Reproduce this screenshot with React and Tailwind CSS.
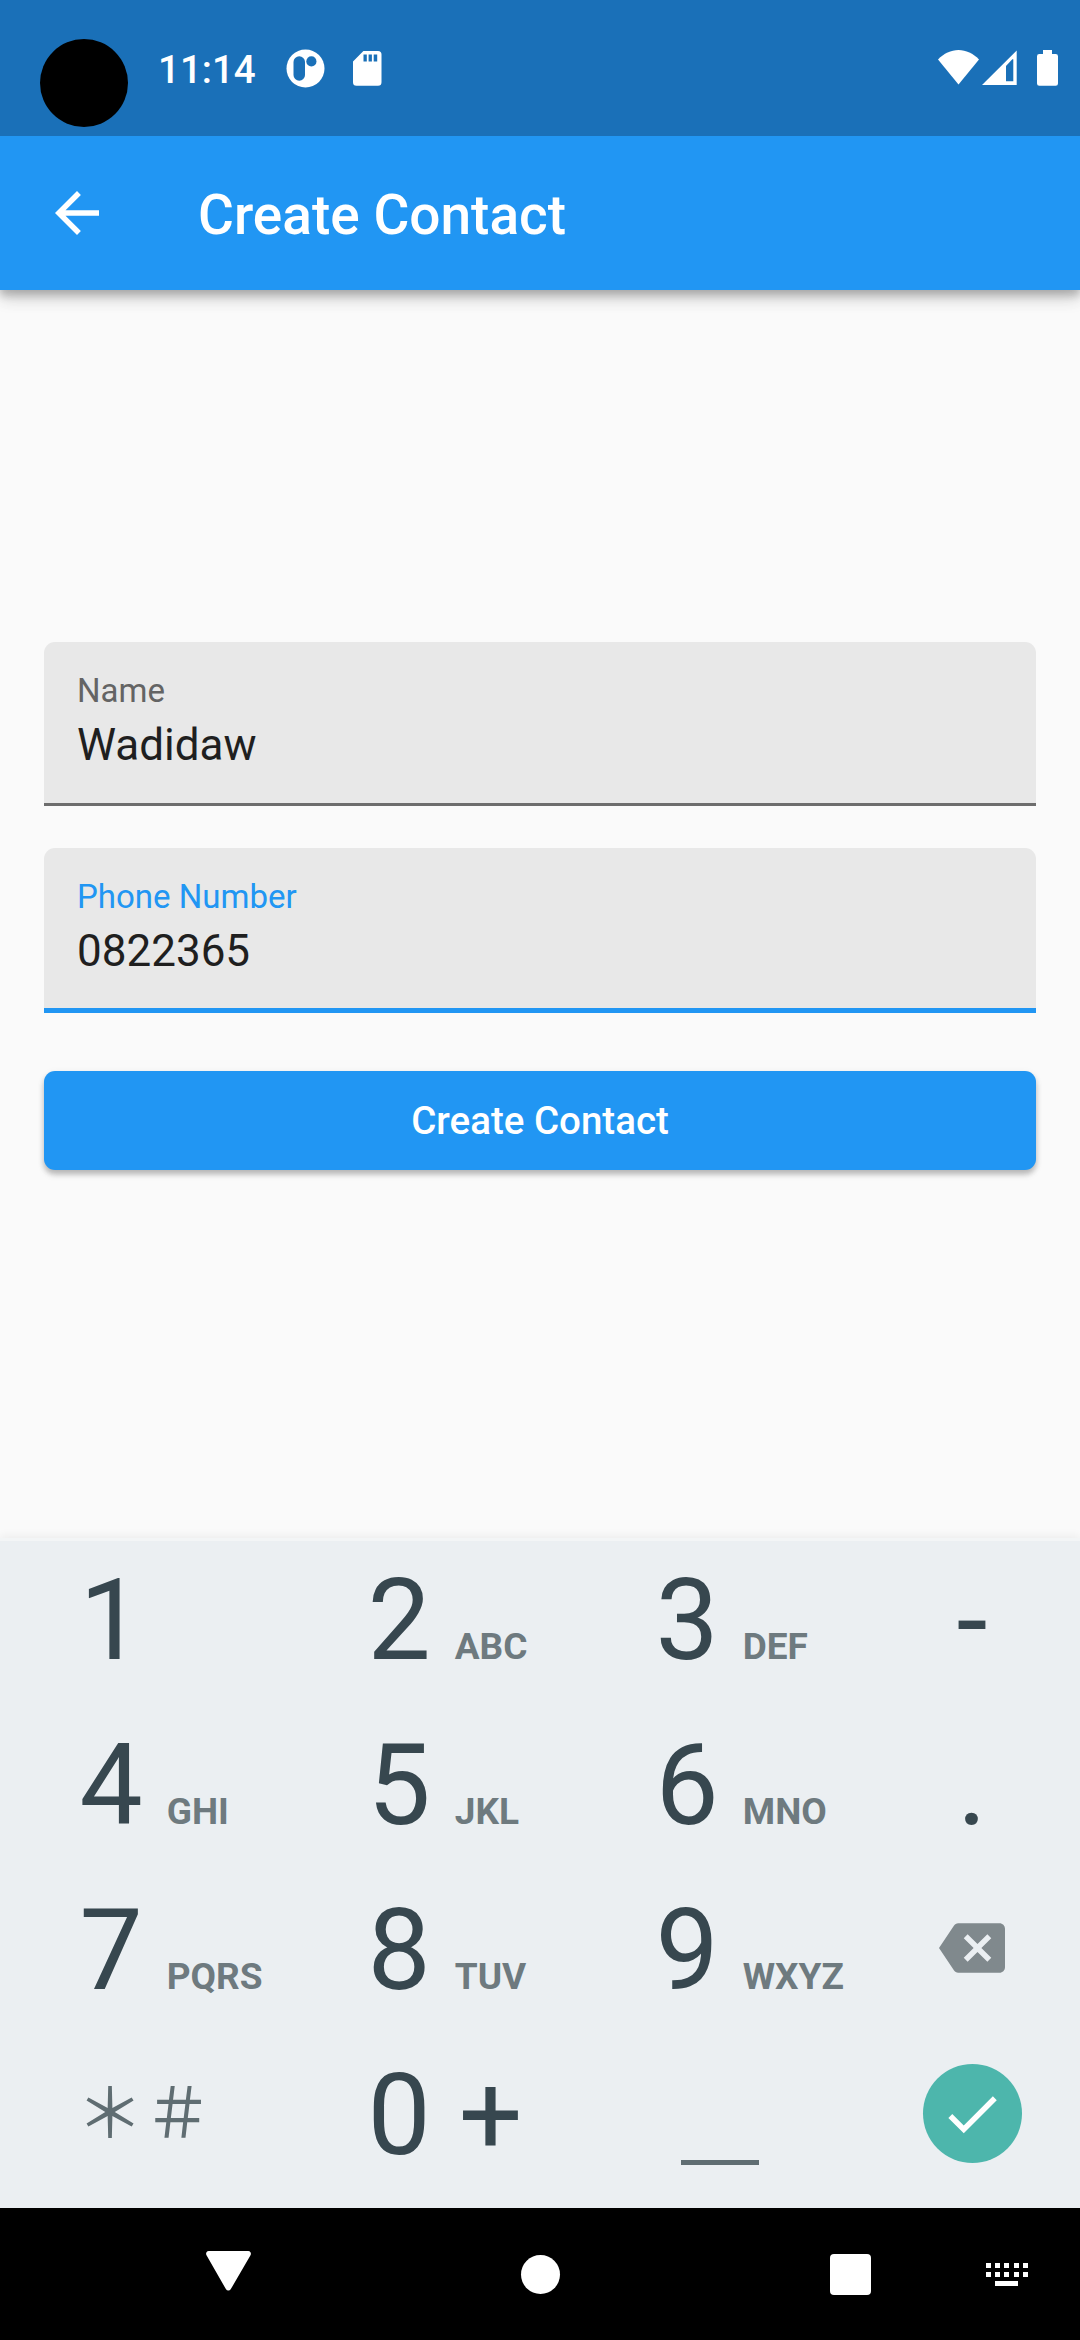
const KEYS = [
  [["1", ""], ["2", "ABC"], ["3", "DEF"]],
  [["4", "GHI"], ["5", "JKL"], ["6", "MNO"]],
  [["7", "PQRS"], ["8", "TUV"], ["9", "WXYZ"]],
];

function StatusBar() {
  return (
    <div className="relative z-10 flex h-[136px] items-start bg-[#1a70b8] text-white">
      <div className="mt-[39px] ml-[40px] size-[88px] rounded-full bg-black" />
      <div className="mt-[47px] ml-[30px] w-[101px] text-[38.5px] leading-[46px] font-medium">11:14</div>
      <svg className="mt-[49px] ml-[27px]" width="39" height="39" viewBox="0 0 39 39">
        <circle cx="19.5" cy="19.5" r="19" fill="white" />
        <rect x="7.5" y="7.2" width="11.5" height="24.5" rx="5.75" fill="#1a70b8" />
        <circle cx="25.4" cy="12.4" r="5.1" fill="#1a70b8" />
      </svg>
      <svg className="mt-[51px] ml-[28px]" width="29" height="35" viewBox="0 0 29 35">
        <path fill="white" d="M10.4 0H25a3.5 3.5 0 0 1 3.5 3.5V31.200a3.500 3.500 0 0 1-3.500 3.500H3.500A3.500 3.500 0 0 1 0 31.200V10.500Z" />
        <path fill="#1a70b8" d="M10.500 3.400h3.300v7.200h-3.300zM15.600 3.400h3.300v7.200h-3.300zM20.700 3.400h3.500v7.200h-3.500z" />
      </svg>
      <div className="mt-[50px] mr-[22px] ml-auto flex items-start">
        <svg width="41" height="35" viewBox="0 0 41 35" fill="white">
          <path d="M20.500 34.500L0 9.500C5.800 3.500 13 0 20.500 0S35.200 3.500 41 9.500Z" />
        </svg>
        <svg className="ml-[3px]" width="35" height="35" viewBox="0 0 35 35" fill="white">
          <path fillRule="evenodd" d="M34.700 .5V35H0ZM24 16V31.300H31.300V9.200H30.300Z" />
        </svg>
        <svg className="ml-[20px]" width="21" height="36" viewBox="0 0 21 36" fill="white">
          <path d="M6 0h9v4h3.700A2.300 2.300 0 0 1 21 6.300V33.500A2.300 2.300 0 0 1 18.700 35.800H2.300A2.300 2.300 0 0 1 0 33.500V6.300A2.300 2.300 0 0 1 2.300 4H6Z" />
        </svg>
      </div>
    </div>
  );
}

function AppBar() {
  return (
    <header className="relative flex h-[154px] items-center bg-[#2196f3] text-white shadow-[0_5px_8px_rgba(0,0,0,0.20),0_10px_14px_rgba(0,0,0,0.12),0_2px_22px_rgba(0,0,0,0.08)]">
      <svg className="ml-[44px]" width="66" height="66" viewBox="0 0 24 24" fill="white">
        <path d="M20 11H7.830l5.590-5.590L12 4l-8 8 8 8 1.410-1.410L7.830 13H20v-2z" />
      </svg>
      <h1 className="mt-[4px] ml-[88px] text-[55px] leading-[64px] font-medium">Create Contact</h1>
    </header>
  );
}

function Field({ label, value, active }) {
  return (
    <div
      className={
        active
          ? "mt-[42px] h-[165px] rounded-t-[11px] border-b-[5.5px] border-[#2196f3] bg-[#e8e8e8] px-[33px] pt-[30px]"
          : "h-[164px] rounded-t-[11px] border-b-[3px] border-[#6d6d6d] bg-[#e8e8e8] px-[33px] pt-[30px]"
      }
    >
      <div className={active ? "text-[33px] leading-[38px] text-[#2196f3]" : "text-[33px] leading-[38px] text-[#646464]"}>
        {label}
      </div>
      <div className="mt-[9px] text-[44px] leading-[52px] text-[#1f1f1f]">{value}</div>
    </div>
  );
}

function Digit({ children }) {
  return <span className="text-[112.5px] leading-[165px] text-[#37474f]">{children}</span>;
}

function Key({ digit, letters }) {
  return (
    <div className="flex items-baseline gap-[24px] pl-[79.500px]">
      <Digit>{digit}</Digit>
      <span className="text-[37px] leading-[40px] font-bold text-[#6e7a7f]">{letters}</span>
    </div>
  );
}

function Keyboard() {
  return (
    <div className="relative h-[670px] border-t-[3px] border-[#f3f5f6] bg-[#ebeff2] shadow-[0_-2px_9px_rgba(0,0,0,0.06)]">
      <div className="-mt-[3px] grid grid-cols-[288px_288px_288px_216px] grid-rows-[repeat(4,165px)]">
        {KEYS.map((row, r) => [
          ...row.map(([digit, letters]) => <Key key={digit} digit={digit} letters={letters} />),
          <div key={"side" + r} className="flex justify-center">
            {r === 0 && <Digit>-</Digit>}
            {r === 1 && <Digit>.</Digit>}
            {r === 2 && (
              <svg className="mt-[47px]" width="66" height="66" viewBox="0 0 24 24" fill="#80898d">
                <path d="M22 3H7c-.69 0-1.23.35-1.590.88L0 12l5.410 8.110c.36.53.9.89 1.590.89h15c1.100 0 2-.9 2-2V5c0-1.100-.9-2-2-2zm-3 12.590L17.590 17 14 13.410 10.410 17 9 15.590 12.590 12 9 8.410 10.410 7 14 10.590 17.590 7 19 8.410 15.410 12 19 15.590z" />
              </svg>
            )}
          </div>,
        ])}
        <div className="pt-[26px] pl-[76px] font-['Noto_Sans_CJK_JP',sans-serif] text-[68px] leading-[100px] text-[#5f6d72]">
          ＊＃
        </div>
        <div className="pl-[79.500px] whitespace-pre">
          <Digit>0 +</Digit>
        </div>
        <div className="flex justify-center">
          <div className="mt-[127px] h-[4.500px] w-[78px] bg-[#5f6d72]" />
        </div>
        <div className="flex items-start justify-center">
          <div className="mt-[31px] flex size-[99px] items-center justify-center rounded-full bg-[#4db6ac]">
            <svg width="66" height="66" viewBox="0 0 24 24" fill="white">
              <path d="M9 16.170L4.830 12l-1.420 1.410L9 19 21 7l-1.410-1.410z" />
            </svg>
          </div>
        </div>
      </div>
    </div>
  );
}

function NavBar() {
  return (
    <nav className="flex h-[132px] items-start bg-black">
      <svg className="mt-[43px] ml-[206px]" width="45" height="40" viewBox="0 0 45 40" fill="white">
        <path d="M3 0H42a2.800 2.800 0 0 1 2.500 4.200L24.700 38.300a2.800 2.800 0 0 1-4.700 0L.5 4.200A2.800 2.800 0 0 1 3 0Z" />
      </svg>
      <div className="mt-[47px] ml-[270px] size-[39px] rounded-full bg-white" />
      <div className="mt-[46px] ml-[270px] size-[41px] rounded-[4px] bg-white" />
      <div className="mt-[55px] ml-[115px] flex flex-col items-center gap-[4px]">
        {[0, 1].map((row) => (
          <div key={row} className="flex gap-[4.200px]">
            {[0, 1, 2, 3, 4].map((dot) => (
              <span key={dot} className="size-[5px] bg-white" />
            ))}
          </div>
        ))}
        <span className="h-[5px] w-[23px] bg-white" />
      </div>
    </nav>
  );
}

export default function App() {
  return (
    <div className="flex h-[2340px] w-[1080px] flex-col overflow-hidden bg-[#fafafa] font-['Roboto',sans-serif]">
      <StatusBar />
      <AppBar />
      <main className="grow px-[44px] pt-[352px]">
        <Field label="Name" value="Wadidaw" />
        <Field label="Phone Number" value="0822365" active />
        <button className="mt-[58px] block h-[99px] w-full rounded-[11px] bg-[#2196f3] text-[38.500px] leading-[45px] font-medium text-white shadow-[0_4px_5px_rgba(0,0,0,0.16),0_5px_7px_rgba(0,0,0,0.10),0_2px_8px_rgba(0,0,0,0.06)]">
          Create Contact
        </button>
      </main>
      <Keyboard />
      <NavBar />
    </div>
  );
}
